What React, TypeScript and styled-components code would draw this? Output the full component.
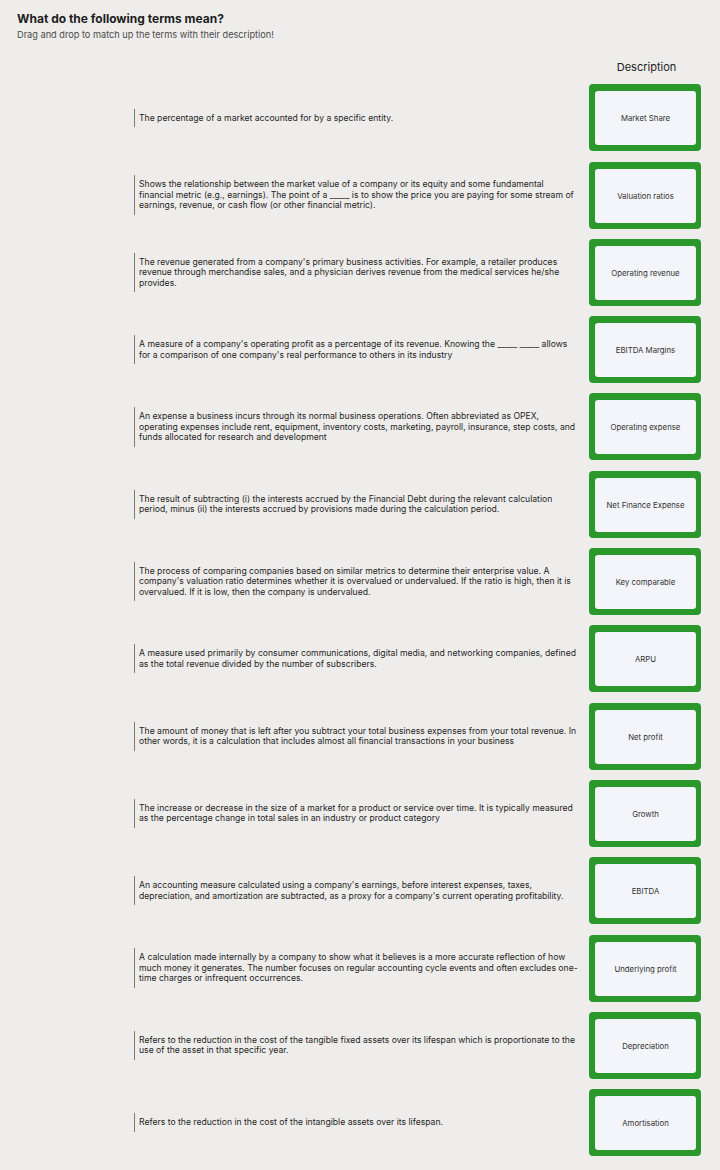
import React from "react";
import styled, { createGlobalStyle } from "styled-components";

const GlobalStyle = createGlobalStyle`
  html, body {
    margin: 0;
    padding: 0;
    background: #efedeb;
  }
  body {
    font-family: "Inter", "Liberation Sans", sans-serif;
    color: #1f1f1f;
  }
`;

const Page = styled.div`
  padding: 12px 19px 16px 17px;
  min-height: 1170px;
  box-sizing: border-box;
`;

const Title = styled.h1`
  margin: 0;
  font-size: 12px;
  line-height: 14px;
  font-weight: 700;
  color: #1d1d1d;
`;

const Subtitle = styled.p`
  margin: 3px 0 0;
  font-size: 9.2px;
  line-height: 12px;
  color: #4a4a4a;
`;

const Board = styled.div`
  display: grid;
  grid-template-columns: 450px 112px;
  column-gap: 5px;
  row-gap: 10.3px;
  margin: 19px 0 0 117px;
  align-items: center;
`;

const HeaderCell = styled.div`
  grid-column: 2;
  text-align: center;
  font-size: 11px;
  line-height: 14px;
  color: #222;
  padding-left: 3px;
`;

const Term = styled.div`
  border-left: 1px solid #7a7a7a;
  padding: 4px 0 4px 4px;
  font-size: 8.65px;
  line-height: 10.4px;
  color: #1f1f1f;
  max-width: 440px;
`;

const Card = styled.div`
  height: 67px;
  box-sizing: border-box;
  background: #2a982a;
  border-radius: 4px;
  padding: 7px 5px 6px 6px;
  display: flex;
`;

const CardInner = styled.div`
  flex: 1;
  background: #f4f5fa;
  border-radius: 3px;
  display: flex;
  align-items: center;
  justify-content: center;
  text-align: center;
  font-size: 7.8px;
  color: #333;
`;

const items: [string, string][] = [
  ["The percentage of a market accounted for by a specific entity.", "Market Share"],
  [
    "Shows the relationship between the market value of a company or its equity and some fundamental financial metric (e.g., earnings). The point of a _____ is to show the price you are paying for some stream of earnings, revenue, or cash flow (or other financial metric).",
    "Valuation ratios",
  ],
  [
    "The revenue generated from a company's primary business activities. For example, a retailer produces revenue through merchandise sales, and a physician derives revenue from the medical services he/she provides.",
    "Operating revenue",
  ],
  [
    "A measure of a company's operating profit as a percentage of its revenue. Knowing the _____ _____ allows for a comparison of one company's real performance to others in its industry",
    "EBITDA Margins",
  ],
  [
    "An expense a business incurs through its normal business operations. Often abbreviated as OPEX, operating expenses include rent, equipment, inventory costs, marketing, payroll, insurance, step costs, and funds allocated for research and development",
    "Operating expense",
  ],
  [
    "The result of subtracting (i) the interests accrued by the Financial Debt during the relevant calculation period, minus (ii) the interests accrued by provisions made during the calculation period.",
    "Net Finance Expense",
  ],
  [
    "The process of comparing companies based on similar metrics to determine their enterprise value. A company's valuation ratio determines whether it is overvalued or undervalued. If the ratio is high, then it is overvalued. If it is low, then the company is undervalued.",
    "Key comparable",
  ],
  [
    "A measure used primarily by consumer communications, digital media, and networking companies, defined as the total revenue divided by the number of subscribers.",
    "ARPU",
  ],
  [
    "The amount of money that is left after you subtract your total business expenses from your total revenue. In other words, it is a calculation that includes almost all financial transactions in your business",
    "Net profit",
  ],
  [
    "The increase or decrease in the size of a market for a product or service over time. It is typically measured as the percentage change in total sales in an industry or product category",
    "Growth",
  ],
  [
    "An accounting measure calculated using a company's earnings, before interest expenses, taxes, depreciation, and amortization are subtracted, as a proxy for a company's current operating profitability.",
    "EBITDA",
  ],
  [
    "A calculation made internally by a company to show what it believes is a more accurate reflection of how much money it generates. The number focuses on regular accounting cycle events and often excludes one-time charges or infrequent occurrences.",
    "Underlying profit",
  ],
  [
    "Refers to the reduction in the cost of the tangible fixed assets over its lifespan which is proportionate to the use of the asset in that specific year.",
    "Depreciation",
  ],
  ["Refers to the reduction in the cost of the intangible assets over its lifespan.", "Amortisation"],
];

export default function App() {
  return (
    <>
      <GlobalStyle />
      <Page>
        <Title>What do the following terms mean?</Title>
        <Subtitle>Drag and drop to match up the terms with their description!</Subtitle>
        <Board>
          <HeaderCell>Description</HeaderCell>
          {items.map(([desc, term]) => (
            <React.Fragment key={term}>
              <Term>{desc}</Term>
              <Card>
                <CardInner>{term}</CardInner>
              </Card>
            </React.Fragment>
          ))}
        </Board>
      </Page>
    </>
  );
}
